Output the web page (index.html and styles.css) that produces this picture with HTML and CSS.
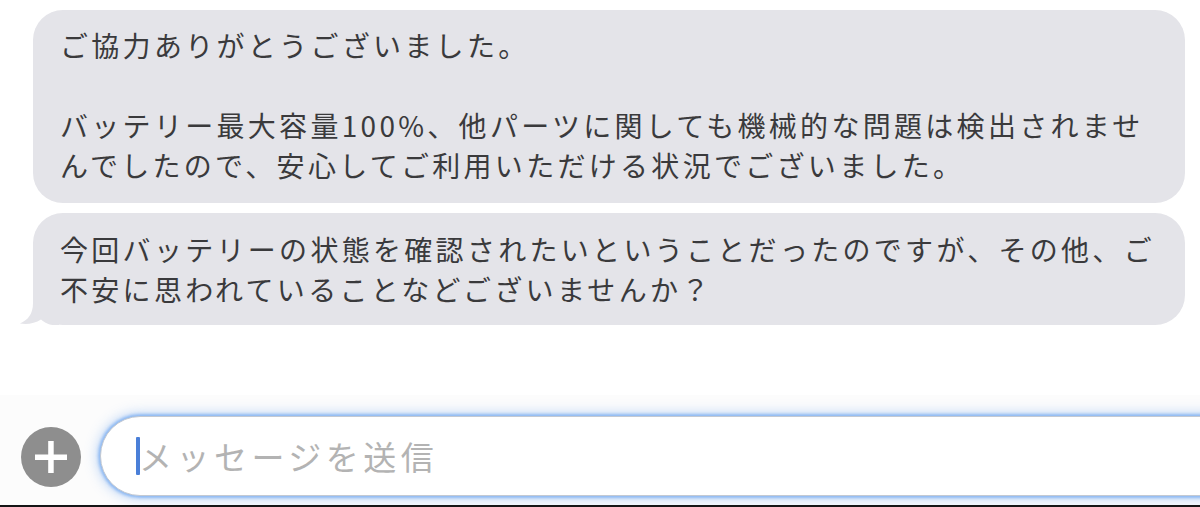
FILE: index.html
```html
<!DOCTYPE html>
<html lang="ja">
<head>
<meta charset="UTF-8">
<meta name="viewport" content="width=device-width, initial-scale=1.0">
<title>メッセージ</title>
<link rel="stylesheet" href="styles.css">
</head>
<body>
<div class="thread">
    <div class="bubble">
        ご協力ありがとうございました。<br>
        <br>
        バッテリー最大容量100%、他パーツに関しても機械的な問題は検出されませ<br>
        んでしたので、安心してご利用いただける状況でございました。
    </div>
    <div class="bubble last">
        今回バッテリーの状態を確認されたいということだったのですが、その他、ご<br>
        不安に思われていることなどございませんか？
        <svg class="tail" width="40" height="40" viewBox="0 0 40 40">
            <path d="M14 0 L14 18 C14 29 9 35 1 38.5 C8 39.8 16 38.5 22 34.5 C26 38 30 40 36 40 L40 40 L40 0 Z" fill="#e4e4e9"/>
        </svg>
    </div>
</div>

<div class="composer">
    <div class="plus">
        <svg width="60" height="60" viewBox="0 0 60 60">
            <circle cx="30" cy="30" r="30" fill="#8e8e8e"/>
            <rect x="14" y="27.5" width="32" height="5.5" fill="#fff"/>
            <rect x="27.2" y="14" width="5.5" height="32" fill="#fff"/>
        </svg>
    </div>
    <div class="field">
        <span class="cursor"></span>
        <span class="placeholder">メッセージを送信</span>
    </div>
</div>
</body>
</html>
```

FILE: styles.css
```css
body {
    margin: 0;
    width: 1200px;
    height: 507px;
    overflow: hidden;
    background-color: #fff;
    font-family: "Noto Sans CJK JP", "Noto Sans", sans-serif;
}
.thread {
    display: flex;
    flex-direction: column;
    gap: 10px;
    padding: 10px 15px 0 33px;
    height: 395px;
    box-sizing: border-box;
}
.bubble {
    position: relative;
    background-color: #e4e4e9;
    border-radius: 30px;
    padding: 15px 20px 18px 27px;
    color: #3a3a3c;
    font-size: 28px;
    line-height: 40px;
    letter-spacing: 3.3px;
    white-space: nowrap;
}
.bubble.last {
    padding-top: 16px;
    padding-bottom: 16px;
}
.tail {
    position: absolute;
    left: -14px;
    bottom: 0;
}
.composer {
    display: flex;
    align-items: center;
    gap: 19px;
    height: 110px;
    padding-left: 21px;
    background-color: #fcfcfc;
    border-bottom: 2px solid #151515;
    overflow: hidden;
}
.plus {
    display: flex;
    flex-shrink: 0;
    margin-top: 14px;
}
.field {
    display: flex;
    align-items: center;
    flex: 1;
    height: 78px;
    margin-top: 12px;
    margin-right: -60px;
    padding-left: 35px;
    background-color: #fff;
    border: 1px solid #c3c9d2;
    border-radius: 40px;
    box-shadow: 0 0 3px 2px rgba(110, 165, 240, 0.7), 0 0 12px 4px rgba(140, 185, 245, 0.45);
}
.cursor {
    width: 4px;
    height: 38px;
    background-color: #4a7fd8;
    border-radius: 1px;
}
.placeholder {
    color: #b3b3b3;
    font-size: 33px;
    letter-spacing: 4.5px;
    margin-left: -1px;
}
```
